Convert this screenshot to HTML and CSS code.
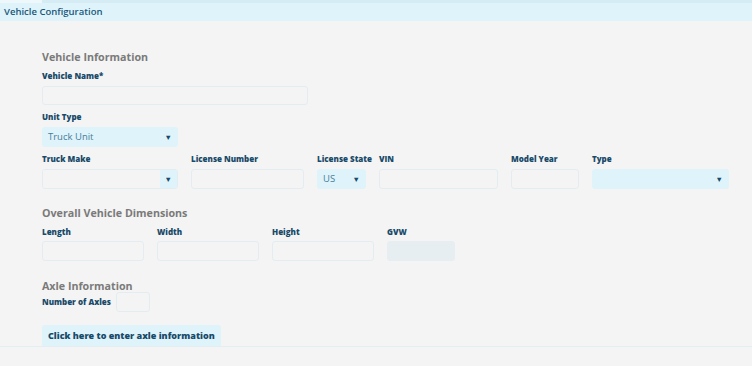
FILE: index.html
```html
<!DOCTYPE html>
<html lang="en">
<head>
    <meta charset="UTF-8">
    <title>Vehicle Configuration</title>
    <link rel="stylesheet" href="styles.css">
</head>
<body>

<div class="topstrip"><span class="tab"></span></div>
<div class="titlebar">Vehicle Configuration</div>

<div class="content">
    <h2 class="section first">Vehicle Information</h2>

    <label class="lbl">Vehicle Name*</label>
    <input type="text" class="field name">

    <label class="lbl">Unit Type</label>
    <div class="select unit">Truck Unit<span class="arrow">&#9660;</span></div>

    <div class="row">
        <div class="col w136">
            <label class="lbl">Truck Make</label>
            <div class="combo"><span class="combo-input"></span><span class="combo-btn"><span class="arrow">&#9660;</span></span></div>
        </div>
        <div class="col w113">
            <label class="lbl">License Number</label>
            <input type="text" class="field">
        </div>
        <div class="col w49">
            <label class="lbl">License State</label>
            <div class="select">US<span class="arrow">&#9660;</span></div>
        </div>
        <div class="col w119">
            <label class="lbl">VIN</label>
            <input type="text" class="field">
        </div>
        <div class="col w68">
            <label class="lbl">Model Year</label>
            <input type="text" class="field">
        </div>
        <div class="col w137">
            <label class="lbl">Type</label>
            <div class="select"><span class="arrow">&#9660;</span></div>
        </div>
    </div>

    <h2 class="section dims-title">Overall Vehicle Dimensions</h2>
    <div class="row dims">
        <div class="col w102">
            <label class="lbl">Length</label>
            <input type="text" class="field">
        </div>
        <div class="col w102">
            <label class="lbl">Width</label>
            <input type="text" class="field">
        </div>
        <div class="col w102">
            <label class="lbl">Height</label>
            <input type="text" class="field">
        </div>
        <div class="col w68">
            <label class="lbl">GVW</label>
            <input type="text" class="field disabled" disabled>
        </div>
    </div>

    <h2 class="section axle">Axle Information</h2>
    <div class="axles">
        <label class="lbl">Number of Axles</label>
        <input type="text" class="field small">
    </div>

    <button class="axle-btn">Click here to enter axle information</button>
</div>
<div class="bottomline"></div>

</body>
</html>
```

FILE: styles.css
```css
body {
    margin: 0;
    background: #f4f4f4;
    font-family: "Open Sans", "Noto Sans", sans-serif;
    width: 752px;
    height: 366px;
    overflow: hidden;
}
.topstrip {
    height: 3px;
    background: #d6ecf4;
}
.tab {
    display: block;
    width: 42px;
    height: 3px;
    background: #eef7fa;
}
.titlebar {
    height: 18px;
    line-height: 18px;
    background: #dff3fb;
    color: #17587a;
    font-size: 9.5px;
    font-weight: 600;
    padding-left: 4px;
}
.content {
    padding-left: 42px;
    height: 325px;
}
.section {
    margin: 0;
    font-size: 10.7px;
    line-height: 16px;
    font-weight: 700;
    color: #7a7a7a;
}
.section.first {
    padding-top: 28px;
    margin-bottom: 5px;
}
.section.dims-title {
    margin-bottom: 5px;
}
.lbl {
    display: block;
    font-size: 8px;
    line-height: 12px;
    font-weight: 800;
    color: #184a69;
    white-space: nowrap;
    margin-bottom: 4px;
}
.field {
    display: block;
    box-sizing: border-box;
    width: 100%;
    height: 20px;
    margin: 0;
    padding: 0;
    border: 1px solid #e3edf1;
    border-radius: 3px;
    background: #f4f4f4;
    outline: none;
}
.field.name {
    width: 266px;
    height: 19px;
    margin-bottom: 6px;
}
.field.disabled {
    background: #e6eef2;
    border-color: #e6eef2;
}
.field.small {
    width: 34px;
}
.select {
    box-sizing: border-box;
    height: 20px;
    line-height: 20px;
    background: #dff3fb;
    border-radius: 3px;
    color: #457d99;
    font-size: 9.5px;
    padding-left: 6px;
    position: relative;
}
.select.unit {
    width: 136px;
    margin-bottom: 6px;
}
.arrow {
    position: absolute;
    right: 6px;
    top: 0;
    font-size: 7.5px;
    color: #184a69;
}
.row {
    display: flex;
    gap: 13px;
    margin-bottom: 16px;
}
.row.dims {
    margin-bottom: 18px;
}
.row.dims .lbl {
    margin-bottom: 3px;
}
.col.w136 { width: 136px; }
.col.w113 { width: 113px; }
.col.w49 { width: 49px; }
.col.w119 { width: 119px; }
.col.w68 { width: 68px; }
.col.w137 { width: 137px; }
.col.w102 { width: 102px; }
.combo {
    display: flex;
    height: 20px;
    box-sizing: border-box;
    border: 1px solid #e3edf1;
    border-radius: 3px;
    overflow: hidden;
}
.combo-input {
    flex: 1;
    background: #f4f4f4;
}
.combo-btn {
    width: 17px;
    background: #dff3fb;
    position: relative;
}
.combo-btn .arrow {
    right: 5px;
    line-height: 18px;
}
.section.axle {
    line-height: 14px;
    margin-bottom: -1px;
}
.axles {
    display: flex;
    align-items: center;
    gap: 5px;
}
.axles .lbl {
    margin: 0;
}
.axle-btn {
    display: block;
    margin-top: 13px;
    height: 21px;
    padding: 0 6px;
    border: none;
    border-radius: 3px 3px 0 0;
    background: #dff3fb;
    color: #184a69;
    font-family: "Open Sans", "Noto Sans", sans-serif;
    font-size: 9px;
    font-weight: 800;
}
.bottomline {
    height: 1px;
    background: #e2eef2;
}
```
